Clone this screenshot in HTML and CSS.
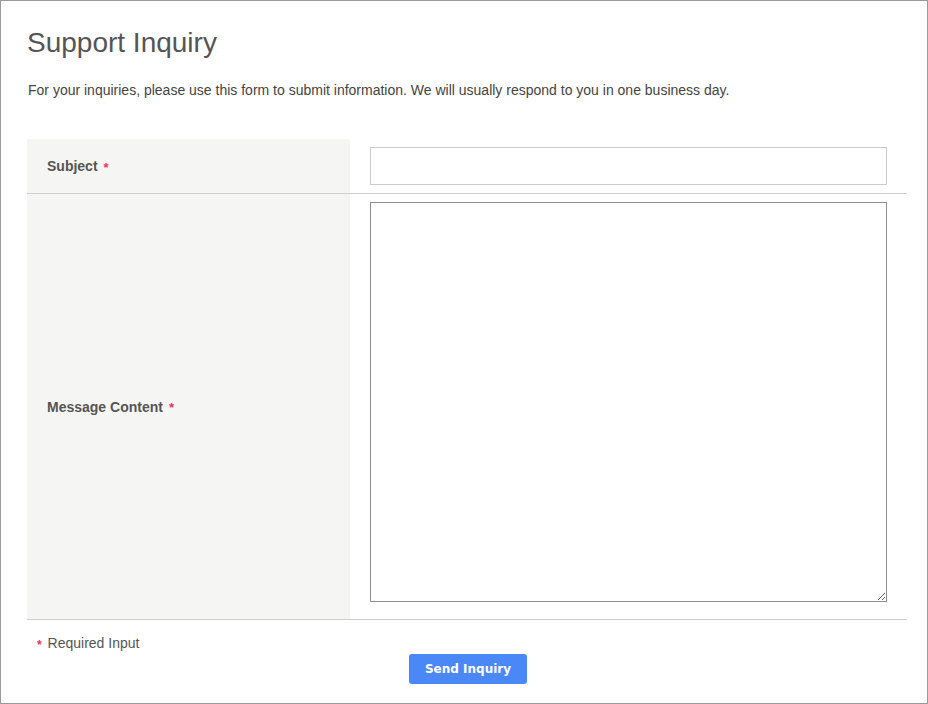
FILE: index.html
```html
<!DOCTYPE html>
<html lang="en">
<head>
<meta charset="utf-8">
<title>Support Inquiry</title>
<link rel="stylesheet" href="styles.css">
</head>
<body>
<div class="page">
  <h1 class="title">Support Inquiry</h1>
  <p class="intro">For your inquiries, please use this form to submit information. We will usually respond to you in one business day.</p>
  <form class="form">
    <div class="row row-subject">
      <div class="label">Subject <span class="req">*</span></div>
      <div class="field"><input class="input" type="text"></div>
    </div>
    <div class="row row-message">
      <div class="label">Message Content <span class="req">*</span></div>
      <div class="field field-message"><textarea class="textarea"></textarea></div>
    </div>
    <div class="note"><span class="req">*</span> Required Input</div>
    <div class="actions"><button class="btn" type="button">Send Inquiry</button></div>
  </form>
</div>
</body>
</html>
```

FILE: styles.css
```css
html, body {
  margin: 0;
  padding: 0;
  background: #fff;
}
.page {
  box-sizing: border-box;
  width: 928px;
  height: 704px;
  border: 1px solid #9a9a9a;
  padding: 26px 20px 0 26px;
  font-family: "Liberation Sans", Arial, Helvetica, sans-serif;
  color: #555;
}
.title {
  margin: 0;
  font-size: 28px;
  line-height: 32px;
  font-weight: normal;
  color: #555;
}
.intro {
  margin: 22px 0 0 1px;
  font-size: 14px;
  line-height: 18px;
  color: #444;
}
.form {
  margin: 40px 0 0 0;
  width: 880px;
}
.row {
  display: grid;
  grid-template-columns: 323px 1fr;
  border-bottom: 1px solid #cfcfcf;
}
.label {
  background: #f5f5f3;
  display: flex;
  align-items: center;
  padding-left: 20px;
  font-size: 14px;
  font-weight: bold;
  color: #555;
}
.req {
  color: #f0305a;
  font-size: 13px;
  font-weight: bold;
  margin-left: 6px;
  position: relative;
  top: 1px;
}
.field {
  padding: 8px 20px;
  display: flex;
}
.field-message {
  padding-bottom: 17px;
}
.input {
  box-sizing: border-box;
  width: 517px;
  height: 38px;
  border: 1px solid #cccccc;
  margin: 0;
  padding: 4px 8px;
  font-size: 14px;
  font-family: inherit;
  outline: none;
}
.textarea {
  box-sizing: border-box;
  width: 517px;
  height: 400px;
  border: 1px solid #8e8e8e;
  margin: 0;
  padding: 4px;
  font-family: inherit;
  font-size: 14px;
  outline: none;
}
.note {
  margin-top: 14px;
  padding-left: 10px;
  font-size: 14px;
  line-height: 18px;
  color: #555;
}
.note .req {
  margin-left: 0;
  margin-right: 2px;
  font-size: 12px;
}
.actions {
  display: flex;
  justify-content: center;
  margin-top: 1px;
  padding-left: 2px;
}
.btn {
  width: 118px;
  height: 30px;
  border: none;
  border-radius: 3px;
  background: #4a88f8;
  color: #fff;
  font-family: "DejaVu Sans", Verdana, sans-serif;
  font-weight: bold;
  font-size: 12px;
  padding: 0;
  cursor: pointer;
}
```
